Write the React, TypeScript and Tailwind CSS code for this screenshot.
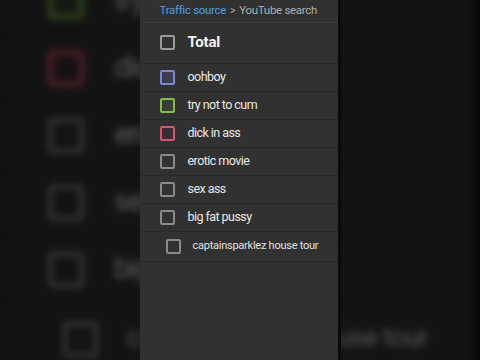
import React from "react";

type Row = { label: string; border: string; fill: string };

const rows: Row[] = [
  { label: "oohboy", border: "border-[#7f88cc]", fill: "bg-[#3a3c52]" },
  { label: "try not to cum", border: "border-[#8bb64f]", fill: "bg-[#374030]" },
  { label: "dick in ass", border: "border-[#d5566f]", fill: "bg-[#3d2b31]" },
  { label: "erotic movie", border: "border-[#8a8a8a]", fill: "bg-transparent" },
  { label: "sex ass", border: "border-[#8a8a8a]", fill: "bg-transparent" },
  { label: "big fat pussy", border: "border-[#8a8a8a]", fill: "bg-transparent" },
];

function Panel() {
  return (
    <div className="w-[201px] h-[360px] bg-[#313131] flex flex-col border-r-[3px] border-[#0a0a0a] font-['Roboto',sans-serif]">
      <div className="h-[23px] border-b border-[#3b3b3b] flex items-center pl-[20px] text-[11.5px] tracking-[-0.3px] leading-none">
        <span className="text-[#4d9fe0]">Traffic source</span>
        <span className="text-[#a8a8a8] mx-[4px] text-[10.5px]">&gt;</span>
        <span className="text-[#b0b0b0]">YouTube search</span>
      </div>
      <div className="h-[41px] pb-[2px] border-b border-[#282828] flex items-center pl-[20px]">
        <div className="w-[15px] h-[15px] border-2 border-[#9a9a9a] rounded-[2px]" />
        <span className="ml-[13px] text-[15px] font-bold tracking-[-0.2px] text-[#f4f4f4]">Total</span>
      </div>
      {rows.map((r) => (
        <div key={r.label} className="h-[28px] border-b border-[#282828] flex items-center pl-[20px]">
          <div className={`w-[15px] h-[15px] border-2 rounded-[2px] ${r.border} ${r.fill}`} />
          <span className="ml-[13px] text-[12.5px] tracking-[-0.55px] text-[#e8e8e8]">{r.label}</span>
        </div>
      ))}
      <div className="h-[30px] border-b border-[#282828] flex items-center pl-[26px]">
        <div className="w-[15px] h-[15px] border-2 border-[#8a8a8a] rounded-[2px]" />
        <span className="ml-[12px] text-[11px] tracking-[-0.25px] text-[#e0e0e0]">captainsparklez house tour</span>
      </div>
      <div className="flex-1" />
    </div>
  );
}

export default function App() {
  return (
    <div className="relative w-[480px] h-[360px] overflow-hidden bg-[#0f0f0f]">
      <div className="absolute inset-0 flex justify-center scale-[2.4] blur-[1.5px] brightness-[0.38]">
        <Panel />
      </div>
      <div className="relative flex justify-center h-full">
        <Panel />
      </div>
    </div>
  );
}
